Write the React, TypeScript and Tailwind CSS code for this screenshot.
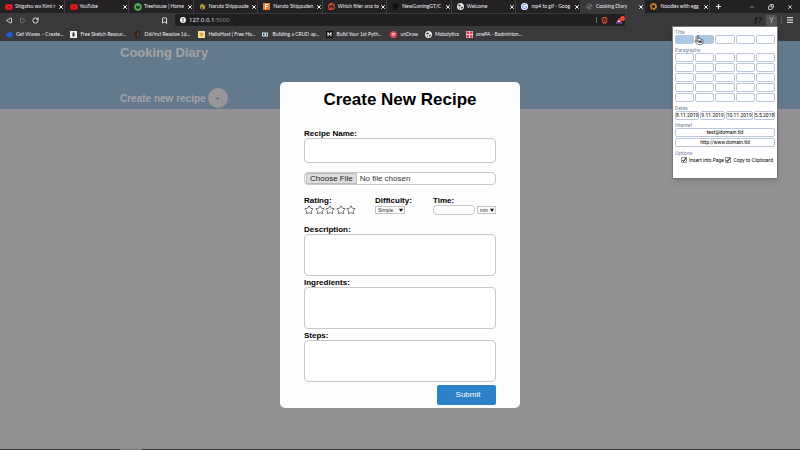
import React from "react";
import { Bookmark, Copy, Github, Menu, Minus, Play, Plus, RotateCw, Star, X } from "lucide-react";
import { FaBrave, FaGoogle, FaHandPointer, FaReddit, FaYoutube } from "react-icons/fa6";

type Tab = { title: string; icon: React.ReactNode; active?: boolean };

const Earth = () => (
  <svg viewBox="0 0 14 14" className="size-[7px]">
    <circle cx="7" cy="7" r="7" fill="#e8e8e8" />
    <path d="M2 5l3-2 3 1-1 2-3 1zM8 8l3-1 1 2-3 3zM3 9l2 0 1 2-1 1z" fill="#39383a" />
  </svg>
);

const DimEarth = () => (
  <svg viewBox="0 0 14 14" className="size-[7px]">
    <circle cx="7" cy="7" r="6" fill="#69686a" />
    <path d="M2 5l3-2 3 1-1 2-3 1zM8 8l3-1 1 2-3 3z" fill="#39383a" />
  </svg>
);

const Leaf = () => (
  <svg viewBox="0 0 14 14" className="size-[7px]">
    <circle cx="7" cy="8" r="5" fill="#e0a83a" />
    <path d="M2 9a5 5 0 0 1 6-7l-2 4z" fill="#5ea53a" />
    <path d="M8 3l5 2-4 3z" fill="#d9482c" />
    <circle cx="6" cy="10" r="2" fill="#242225" />
  </svg>
);

const Treehouse = () => (
  <svg viewBox="0 0 14 14" className="size-[8px]">
    <circle cx="7" cy="7" r="5" fill="none" stroke="#4fb853" strokeWidth="3" />
    <path d="M7 1v5" stroke="#4fb853" strokeWidth="3" />
  </svg>
);

const Noodles = () => (
  <svg viewBox="0 0 14 14" className="size-[7px]">
    <circle cx="7" cy="7" r="5" fill="none" stroke="#e88a2c" strokeWidth="4" strokeDasharray="4 1" />
  </svg>
);

const GoogleMark = () => (
  <span className="grid size-[7px] place-items-center rounded-full bg-white">
    <FaGoogle className="size-[5px] text-[#4285f4]" />
  </span>
);

const tabs: Tab[] = [
  { title: "Shigatsu wa Kimi r", icon: <FaYoutube className="size-[8px] text-[#f01818]" /> },
  { title: "YouTube", icon: <FaYoutube className="size-[8px] text-[#f01818]" /> },
  { title: "Treehouse | Home", icon: <Treehouse /> },
  { title: "Naruto Shippuude", icon: <Leaf /> },
  {
    title: "Naruto Shippuden",
    icon: (
      <svg viewBox="0 0 14 14" className="size-[7px]">
        <rect width="14" height="14" fill="#e87b2a" />
        <path d="M5 12V3h6M5 7h5" stroke="#fff" strokeWidth="2" fill="none" />
      </svg>
    ),
  },
  { title: "Which filler arcs to", icon: <FaReddit className="size-[7px] text-[#f0502a]" /> },
  { title: "NewGamingGT/C", icon: <Github className="size-[7px] text-[#0c0c0c]" fill="#0c0c0c" /> },
  { title: "Welcome", icon: <Earth /> },
  { title: "mp4 to gif - Goog", icon: <GoogleMark /> },
  { title: "Cooking Diary", icon: <DimEarth />, active: true },
  { title: "Noodles with egg", icon: <Noodles /> },
];

const bookmarks = [
  {
    title: "Get Waves – Create...",
    icon: (
      <svg viewBox="0 0 14 14" className="size-[7px]">
        <path d="M0 7l4-4 6-1 4 4-1 5-6 2-6-2z" fill="#1f5fd0" />
      </svg>
    ),
  },
  {
    title: "Free Sketch Resour...",
    icon: (
      <svg viewBox="0 0 14 14" className="size-[7px]">
        <rect width="14" height="14" fill="#f2f2f2" />
        <path d="M5 3h4v8H5z" fill="#333" />
      </svg>
    ),
  },
  {
    title: "DaVinci Resolve 16...",
    icon: (
      <svg viewBox="0 0 14 14" className="size-[7px]">
        <ellipse cx="7" cy="7" rx="5" ry="7" fill="#2a201c" />
        <path d="M7 1c3 3 3 9 0 12z" fill="#9a5a2a" />
      </svg>
    ),
  },
  {
    title: "HelioHost | Free Ho...",
    icon: (
      <svg viewBox="0 0 14 14" className="size-[7px]">
        <rect width="14" height="14" fill="#f3dc9c" />
        <circle cx="7" cy="7" r="4" fill="#e6a53c" />
      </svg>
    ),
  },
  {
    title: "Building a CRUD ap...",
    icon: (
      <svg viewBox="0 0 14 14" className="size-[7px]">
        <rect y="3" width="12" height="8" fill="#c9dbe6" />
        <path d="M2 5h3v4H2zM8 5h2v4H8z" fill="#2f4450" />
      </svg>
    ),
  },
  {
    title: "Build Your 1st Pyth...",
    icon: (
      <svg viewBox="0 0 14 14" className="size-[7px]">
        <rect width="14" height="14" fill="#0d0d0d" />
        <path d="M4 11V3l3 5 3-5v8" stroke="#fff" strokeWidth="2" fill="none" />
      </svg>
    ),
  },
  {
    title: "unDraw",
    icon: (
      <svg viewBox="0 0 14 14" className="size-[7px]">
        <circle cx="7" cy="7" r="7" fill="#e4475a" />
        <path d="M4 5h6M4 8h6" stroke="#f9c9cf" strokeWidth="2" />
      </svg>
    ),
  },
  { title: "Mobalytics", icon: <Earth /> },
  {
    title: "onePA - Badminton...",
    icon: (
      <svg viewBox="0 0 14 14" className="size-[7px]">
        <rect width="14" height="14" fill="#f6d9dc" />
        <path d="M1 1h5v5H1zM8 1h5v5H8zM1 8h5v5H1zM8 8h5v5H8z" fill="#d8354a" />
      </svg>
    ),
  },
];

function TabStrip() {
  return (
    <div className="flex h-[13px] bg-[#232124]">
      <div className="flex min-w-0 flex-1">
        {tabs.map((tab, i) => (
          <div
            key={i}
            className={
              "flex min-w-0 flex-1 items-center border-r pl-[5px] " +
              (tab.active ? "border-[#39383a] bg-[#39383a]" : "border-[#3f3d40]")
            }
          >
            <span className="flex w-[10px] shrink-0">{tab.icon}</span>
            <button className="min-w-0 flex-1 whitespace-nowrap text-left">{tab.title}</button>
            <button aria-label="Close tab" className="shrink-0">
              <X className="size-[6px]" strokeWidth={4} />
            </button>
          </div>
        ))}
      </div>
      <div className="flex w-[90px] shrink-0 items-center justify-between pl-[5px] pr-[7px]">
        <button aria-label="New tab">
          <Plus className="size-[7px]" strokeWidth={4} />
        </button>
        <div className="flex gap-[13px]">
          <button aria-label="Minimize">
            <Minus className="size-[6px]" />
          </button>
          <button aria-label="Restore">
            <Copy className="size-[6px] -scale-x-100" strokeWidth={3} />
          </button>
          <button aria-label="Close window">
            <X className="size-[6px]" strokeWidth={3} />
          </button>
        </div>
      </div>
    </div>
  );
}

function Toolbar() {
  return (
    <div className="flex h-[14px] items-center pl-[6px] pr-[6px]">
      <div className="flex w-[155px] items-center gap-[6px]">
        <button aria-label="Back">
          <Play className="size-[7px] -scale-x-100" strokeWidth={3} />
        </button>
        <button aria-label="Forward" className="text-[#77767a]">
          <Play className="size-[7px]" strokeWidth={3} />
        </button>
        <button aria-label="Reload">
          <RotateCw className="size-[7px]" strokeWidth={3} />
        </button>
      </div>
      <button aria-label="Bookmark this page">
        <Bookmark className="size-[7px]" strokeWidth={3} />
      </button>
      <div className="ml-[7px] flex h-[12px] min-w-0 flex-1 items-center rounded-[2px] bg-[#1f1e20] pl-[5px]">
        <svg viewBox="0 0 12 12" className="size-[6px] shrink-0">
          <circle cx="6" cy="6" r="6" fill="#f4f4f4" />
          <path d="M6 2.500v4M6 8v2" stroke="#222" strokeWidth="2" />
        </svg>
        <span className="ml-[3px] flex-1 font-['Open_Sans',sans-serif] text-[6px]">
          127.0.0.1<span className="text-[#98979a]">:5000</span>
        </span>
        <span className="mr-[4px] h-[6px] w-px bg-[#6a696c]" />
        <FaBrave className="size-[7px] text-[#f0562a]" />
        <svg viewBox="0 0 20 16" className="ml-[7px] h-[8px] w-[10px]">
          <path d="M8 4L1 15h14z" fill="#e43d5b" />
          <path d="M8 8l-3 5h6z" fill="#fff" />
          <path d="M1 15h14l-4-3H5z" fill="#3c4bb0" />
          <circle cx="15" cy="5" r="5" fill="#f04a2e" />
        </svg>
      </div>
      <div className="flex w-[169px] items-center justify-end gap-[4px]">
        <span className="font-['Liberation_Serif',serif] text-[8px] font-bold italic text-[#111]">ƒ?</span>
        <button
          aria-label="Form filler"
          className="grid size-[11px] place-items-center rounded-[1px] bg-[#555356] text-[7px] font-bold text-[#a3a2a4]"
        >
          Y
        </button>
        <span className="h-[7px] w-px bg-[#5c5b5e]" />
        <button aria-label="Menu">
          <Menu className="size-[8px]" strokeWidth={3} />
        </button>
      </div>
    </div>
  );
}

function Bookmarks() {
  return (
    <nav className="flex h-[14px] items-center gap-[7px] overflow-hidden pl-[6px]">
      {bookmarks.map((b) => (
        <a
          key={b.title}
          href="#"
          className={
            "flex shrink-0 items-center gap-[3px] whitespace-nowrap " +
            (b.title.endsWith("...") ? "min-w-[57px]" : "")
          }
        >
          {b.icon}
          {b.title}
        </a>
      ))}
    </nav>
  );
}

const cell =
  "flex h-[9px] items-center justify-center whitespace-nowrap rounded-[2px] border border-[#b9c7d8] text-[5px] text-black";
const heading = "text-[5px] leading-[6px] text-[#70839b]";

function FillerPopup() {
  return (
    <aside className="absolute right-[22px] top-[26px] z-20 w-[106px] border border-[#777] bg-white px-[2px] pb-[15px] pt-[2px] font-[Roboto,sans-serif] shadow-md">
      <h3 className={heading}>Title</h3>
      <div className="grid grid-cols-5 gap-px">
        {[0, 1, 2, 3, 4].map((i) => (
          <button
            key={i}
            aria-label={`Title ${i + 1}`}
            className={cell + (i < 2 ? " bg-[#a9c8e8]" : " bg-white")}
          />
        ))}
      </div>
      <h3 className={heading + " mt-[3px]"}>Paragraphs</h3>
      <div className="grid grid-cols-5 gap-px">
        {Array.from({ length: 25 }, (_, i) => (
          <button key={i} aria-label={`Paragraph ${i + 1}`} className={cell} />
        ))}
      </div>
      <h3 className={heading + " mt-[3px]"}>Dates</h3>
      <div className="flex gap-px">
        {["8.11.2019", "9.11.2019", "10.11.2019", "5.5.2018"].map((d) => (
          <button key={d} className={cell + " flex-auto"}>
            {d}
          </button>
        ))}
      </div>
      <h3 className={heading + " mt-[2px]"}>Internet</h3>
      <div className="grid gap-px">
        <button className={cell}>test@domain.tld</button>
        <button className={cell}>http://www.domain.tld</button>
      </div>
      <h3 className={heading + " mt-[3px]"}>Options</h3>
      <div className="mt-px flex justify-between pl-[6px] pr-[2px] text-[5px] leading-[6px] text-black">
        {["Insert into Page", "Copy to Clipboard"].map((o) => (
          <label key={o} className="flex items-center gap-[2px] whitespace-nowrap">
            <span className="relative flex">
              <input
                type="checkbox"
                defaultChecked
                className="peer size-[6px] appearance-none border border-[#999] bg-[#eee]"
              />
              <svg
                viewBox="0 0 12 12"
                className="pointer-events-none absolute inset-0 hidden size-[6px] peer-checked:block"
              >
                <path d="M3 6l2 3 5-7" stroke="#111" strokeWidth="2" fill="none" />
              </svg>
            </span>
            {o}
          </label>
        ))}
      </div>
      <FaHandPointer className="absolute left-[22px] top-[8px] h-[10px] w-[8px] overflow-visible fill-white stroke-[#333] stroke-[40px]" />
    </aside>
  );
}

const field = "block w-full rounded-[4px] border border-[#c8c8c8] bg-white";
const label = "block font-bold leading-[9px]";

function Select({ id, options, className }: { id: string; options: string[]; className: string }) {
  return (
    <span className={"relative block " + className}>
      <select
        id={id}
        aria-label={id}
        className="block h-[8px] w-full appearance-none border border-[#c4c4c4] bg-[#fafafa] pl-[2px] text-[5px] leading-[6px] text-[#333]"
      >
        {options.map((o) => (
          <option key={o}>{o}</option>
        ))}
      </select>
      <svg viewBox="0 0 6 6" className="pointer-events-none absolute right-[2px] top-[2px] size-[4px]">
        <path d="M0 1h6L3 6z" fill="#111" />
      </svg>
    </span>
  );
}

function RecipeDialog() {
  return (
    <div className="absolute inset-x-0 top-[41px] z-10 flex justify-center">
      <form
        role="dialog"
        aria-labelledby="dialog-title"
        onSubmit={(e) => e.preventDefault()}
        className="mt-[41px] w-[30%] min-w-[240px] rounded-[5px] bg-[#fefdfe] px-6 pb-[3px] pt-2 text-[8px] text-black"
      >
        <h2 id="dialog-title" className="mb-[19px] text-center text-[17px] font-bold leading-[20px]">
          Create New Recipe
        </h2>
        <label htmlFor="name" className={label}>
          Recipe Name:
        </label>
        <input id="name" className={field + " h-[25px] px-2"} />
        <input
          type="file"
          aria-label="Recipe photo"
          className={
            field +
            " mt-[9px] h-[13px] pl-px leading-[11px] text-[#333] file:mr-[3px] file:h-[11px] file:border file:border-solid file:border-[#bbb] file:bg-[#dedede] file:px-[3px] file:leading-[9px] file:text-[#222]"
          }
        />
        <div className="mt-[11px] flex">
          <div className="w-[71px]">
            <span className={label}>Rating:</span>
            <div className="flex w-[52px] justify-between">
              {[1, 2, 3, 4, 5].map((n) => (
                <button key={n} type="button" aria-label={`${n} stars`}>
                  <Star className="size-[10px] text-[#555]" strokeWidth={2} />
                </button>
              ))}
            </div>
          </div>
          <div className="w-[58px]">
            <label htmlFor="difficulty" className={label}>
              Difficulty:
            </label>
            <Select id="difficulty" options={["Simple", "Medium", "Hard"]} className="mt-px w-[30px]" />
          </div>
          <div className="flex-1">
            <label htmlFor="time" className={label}>
              Time:
            </label>
            <div className="flex items-center gap-[2px]">
              <input id="time" className={field + " h-[10px] min-w-0 flex-1 px-1"} />
              <Select id="unit" options={["min", "h"]} className="w-[19px]" />
            </div>
          </div>
        </div>
        <div className="mb-[3px] mt-[10px] flex flex-col gap-[2px]">
          {["Description", "Ingredients", "Steps"].map((name) => (
            <div key={name}>
              <label htmlFor={name} className={label}>
                {name}:
              </label>
              <textarea id={name} className={field + " h-[42px] resize-none px-2 py-1"} />
            </div>
          ))}
        </div>
        <button className="ml-auto block h-[20px] w-[59px] rounded-[2px] bg-[#2d81c7] pl-[3px] text-white">
          Submit
        </button>
      </form>
    </div>
  );
}

export default function App() {
  return (
    <div className="relative flex min-h-screen flex-col overflow-hidden bg-[#939194] font-['Liberation_Sans',Arial,sans-serif]">
      <header className="bg-[#39383a] font-[Lato,sans-serif] text-[5px] leading-[7px] text-[#f2f2f2]">
        <TabStrip />
        <Toolbar />
        <Bookmarks />
      </header>
      <main className="flex-1">
        <section className="h-[68px] bg-[#637a8d] px-[15%] pt-[4px] font-bold text-[#a3a3a5]">
          <h1 className="text-[13px] leading-[16px]">Cooking Diary</h1>
          <div className="mt-[27px] flex items-center gap-[2px] text-[10px]">
            <h2>Create new recipe</h2>
            <button
              aria-label="Add recipe"
              className="grid size-[20px] place-items-center rounded-full bg-[#989698] text-[6px] text-[#5c5b5d]"
            >
              +
            </button>
          </div>
        </section>
      </main>
      <footer className="h-px bg-[#353436]">
        <div className="ml-[15%] h-px w-[22px] bg-[#777578]" />
      </footer>
      <RecipeDialog />
      <FillerPopup />
    </div>
  );
}
